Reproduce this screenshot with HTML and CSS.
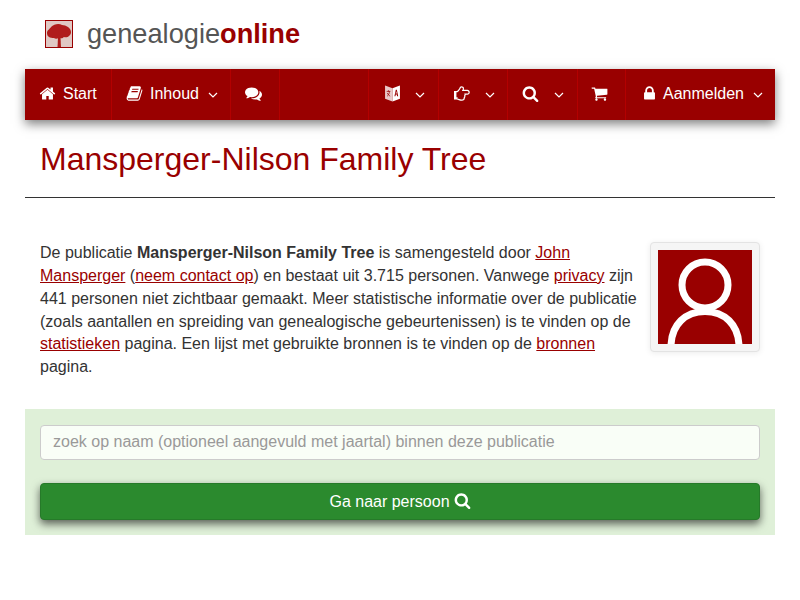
FILE: index.html
```html
<!DOCTYPE html>
<html lang="nl">
<head>
    <meta charset="UTF-8">
    <meta name="viewport" content="width=device-width, initial-scale=1.0">
    <title>Mansperger-Nilson Family Tree</title>
    <link rel="stylesheet" href="styles.css">
</head>
<body>
    <div class="page">
        <header class="brand">
            <svg class="brand-logo" viewBox="0 0 28 28">
                <defs><filter id="soft"><feGaussianBlur stdDeviation="0.6"/></filter></defs>
                <rect width="28" height="28" fill="#e0c8c4"/>
                <g filter="url(#soft)" fill="#b01f1a">
                    <path d="M12.500 27l.5-9h2.500l.5 9z"/>
                    <path d="M2 13c0-3 3-4 4-6 3-3 8-4 11-2 4 0 9 3 9 7 0 4-4 6-7 5-2 2-3 1-5 1-2 1-4 1-5 0-4 0-7-1-7-5z"/>
                </g>
                <rect x="0.500" y="0.500" width="27" height="27" fill="none" stroke="#990000"/>
            </svg>
            <div class="brand-name">genealogie<b>online</b></div>
        </header>

        <nav class="navbar">
            <a class="nav-item nav-start" href="#">
                <svg class="icon" viewBox="0 0 1792 1792"><path d="M1472 992v480q0 26-19 45t-45 19h-384v-384h-256v384h-384q-26 0-45-19t-19-45v-480q0-1 .5-3t.5-3l575-474 575 474q1 2 1 6zm223-69l-62 74q-8 9-21 11h-3q-13 0-21-7l-692-577-692 577q-12 8-24 7-13-2-21-11l-62-74q-8-10-7-23.500t11-21.500l719-599q32-26 76-26t76 26l244 204v-195q0-14 9-23t23-9h192q14 0 23 9t9 23v408l219 182q10 8 11 21.500t-7 23.500z"/></svg>
                Start
            </a>
            <a class="nav-item nav-inhoud" href="#">
                <svg class="icon" viewBox="0 0 1792 1792"><path d="M1703 478q40 57 18 129l-275 906q-19 64-76.500 107.500t-122.500 43.500h-923q-77 0-148.500-53.500t-99.500-131.500q-24-67-2-127 0-4 3-27t4-37q1-8-3-21.500t-3-19.500q2-11 8-21t16.500-23.500 16.500-23.500q23-38 45-91.500t30-91.500q3-10 .5-30t-.5-28q3-11 17-28t17-23q21-36 42-92t25-90q1-9-2.500-32t.5-28q4-13 22-30.500t22-22.500q19-26 42.500-84.500t27.500-96.500q1-8-3-25.500t-2-26.500q2-8 9-18t18-23 17-21q8-12 16.500-30.500t15-35 16-36 19.500-32 26.500-23.500 36-11.500 47.500 5.500l-1 3q38-9 51-9h761q74 0 114 56t18 130l-274 906q-36 119-71.500 153.500t-128.500 34.500h-869q-27 0-38 15-11 16-1 43 24 70 144 70h923q29 0 56-15.500t35-41.500l300-987q7-22 5-57 38 15 59 43zm-1064 2q-4 13 2 22.500t20 9.500h608q13 0 25.500-9.500t16.500-22.500l21-64q4-13-2-22.500t-20-9.500h-608q-13 0-25.500 9.500t-16.500 22.500zm-83 256q-4 13 2 22.500t20 9.500h608q13 0 25.500-9.500t16.500-22.500l21-64q4-13-2-22.500t-20-9.500h-608q-13 0-25.500 9.500t-16.500 22.500z"/></svg>
                Inhoud
                <svg class="caret" viewBox="0 0 10 6"><path d="M1 1l4 4 4-4"/></svg>
            </a>
            <a class="nav-item nav-chat" href="#">
                <svg class="icon" viewBox="0 0 1792 1792"><path d="M1408 768q0 139-94 257t-256.500 186.500-353.500 68.500q-86 0-176-16-124 88-278 128-36 9-86 16h-3q-11 0-20.500-8t-11.500-21q-1-3-1-6.500t.5-6.500 2-6l2.500-5 3.500-5.500 4-5 4.500-5 4-4.500q5-6 23-25t26-29.500 22.500-29 25-38.500 20.500-44q-124-72-195-177t-71-224q0-139 94-257t256.500-186.500 353.500-68.500 353.500 68.500 256.500 186.500 94 257zm384 256q0 120-71 224.500t-195 176.500q10 24 20.500 44t25 38.500 22.500 29 26 29.500 23 25q1 1 4 4.500t4.500 5 4 5 3.500 5.500l2.500 5 2 6 .5 6.500-1 6.500q-3 14-13 22t-22 7q-50-7-86-16-154-40-278-128-90 16-176 16-271 0-472-132 58 4 88 4 161 0 309-45t264-129q125-92 192-212t67-254q0-77-23-152 129 71 204 178t75 230z"/></svg>
            </a>
            <div class="nav-spacer"></div>
            <a class="nav-item nav-lang" href="#">
                <svg class="icon" viewBox="0 0 16 16">
                    <path class="page-left" d="M1 .5l7 2.500v12.500l-7-2.500z"/>
                    <path d="M8 3l7-2.500v12.500l-7 2.500z"/>
                    <path class="page-mark" d="M9.800 10.500l1.300-6h1l1.300 6h-1.100l-.3-1.500h-.9l-.3 1.500zM11 8h1l-.5-2.200z"/>
                    <path class="page-line" d="M2.500 6h3.500M4.200 5v1.200M3 10.500c1.500-1 2-3 2.200-4.500M3 7.500c.8 1.200 1.500 2.500 2.800 3"/>
                </svg>
                <svg class="caret" viewBox="0 0 10 6"><path d="M1 1l4 4 4-4"/></svg>
            </a>
            <a class="nav-item nav-hand" href="#">
                <svg class="icon" viewBox="0 0 1792 1792"><path d="M384 1344q0-26-19-45t-45-19-45 19-19 45 19 45 45 19 45-19 19-45zm1152-576q0-51-39-89.500t-89-38.500h-576q0-20 15-48.500t33-55 33-68 15-84.500q0-67-44.500-97.500t-115.500-30.500q-24 0-90 139-24 44-37 65-40 64-112 145-71 81-101 106-69 57-140 57h-32v640h32q72 0 167 32t193.500 64 179.500 32q189 0 189-167 0-26-5-56 30-16 47.500-52.500t17.500-73.500-18-69q53-50 53-119 0-25-10-55.500t-25-47.500h331q52 0 90-38t38-90zm128-1q0 105-76 181t-181 76h-169q-4 62-37 119 3 21 3 43 0 101-60 178 1 139-85 219.500t-227 80.500q-133 0-322-69-164-59-223-59h-288q-53 0-90.500-37.500t-37.500-90.500v-640q0-53 37.500-90.500t90.500-37.500h288q10 0 21.500-4.500t23.500-14 22.500-18 24-22.500 20.500-21.500 19-21.500 14-17q65-74 100-129 13-21 33-62t37-72 40.500-63 55-49.500 69.500-17.500q125 0 206.500 67t81.500 189q0 68-22 128h374q104 0 180 76t76 179z"/></svg>
                <svg class="caret" viewBox="0 0 10 6"><path d="M1 1l4 4 4-4"/></svg>
            </a>
            <a class="nav-item nav-search" href="#">
                <svg class="icon" viewBox="0 0 1792 1792"><path d="M1216 832q0-185-131.500-316.500t-316.500-131.500-316.500 131.500-131.500 316.500 131.500 316.500 316.500 131.500 316.500-131.500 131.500-316.500zm512 832q0 52-38 90t-90 38q-54 0-90-38l-343-342q-179 124-399 124-143 0-273.500-55.500t-225-150-150-225-55.500-273.500 55.500-273.500 150-225 225-150 273.500-55.500 273.500 55.500 225 150 150 225 55.500 273.500q0 220-124 399l343 343q37 37 37 90z"/></svg>
                <svg class="caret" viewBox="0 0 10 6"><path d="M1 1l4 4 4-4"/></svg>
            </a>
            <a class="nav-item nav-cart" href="#">
                <svg class="icon" viewBox="0 0 1792 1792"><path d="M704 1536q0 52-38 90t-90 38-90-38-38-90 38-90 90-38 90 38 38 90zm896 0q0 52-38 90t-90 38-90-38-38-90 38-90 90-38 90 38 38 90zm128-1088v512q0 24-16.500 42.500t-40.500 21.500l-1044 122q13 60 13 70 0 16-24 64h920q26 0 45 19t19 45-19 45-45 19h-1024q-26 0-45-19t-19-45q0-11 8-31.500t16-36 21.500-40 15.500-29.500l-177-823h-204q-26 0-45-19t-19-45 19-45 45-19h256q16 0 28.500 6.500t19.500 15.500 13 24.500 8 26 5.500 29.500 4.500 26h1201q26 0 45 19t19 45z"/></svg>
            </a>
            <a class="nav-item nav-login" href="#">
                <svg class="icon" viewBox="0 0 1792 1792"><path d="M640 768h512v-192q0-106-75-181t-181-75-181 75-75 181v192zm832 96v576q0 40-28 68t-68 28h-960q-40 0-68-28t-28-68v-576q0-40 28-68t68-28h32v-192q0-184 132-316t316-132 316 132 132 316v192h32q40 0 68 28t28 68z"/></svg>
                Aanmelden
                <svg class="caret" viewBox="0 0 10 6"><path d="M1 1l4 4 4-4"/></svg>
            </a>
        </nav>

        <h1 class="title">Mansperger-Nilson Family Tree</h1>

        <section class="intro">
            <p class="intro-text">De publicatie <b>Mansperger-Nilson Family Tree</b> is samengesteld door <a href="#">John Mansperger</a> (<a href="#">neem contact op</a>) en bestaat uit 3.715 personen. Vanwege <a href="#">privacy</a> zijn 441 personen niet zichtbaar gemaakt. Meer statistische informatie over de publicatie (zoals aantallen en spreiding van genealogische gebeurtenissen) is te vinden op de <a href="#">statistieken</a> pagina. Een lijst met gebruikte bronnen is te vinden op de <a href="#">bronnen</a> pagina.</p>
            <div class="thumb">
                <svg viewBox="0 0 94 94">
                    <rect width="94" height="94" fill="#990000"/>
                    <path d="M13 97C13 74 28 61.500 47 61.500S81 74 81 97" fill="none" stroke="#fff" stroke-width="7"/>
                    <circle cx="47" cy="35" r="23" fill="#990000" stroke="#fff" stroke-width="7"/>
                </svg>
            </div>
        </section>

        <form class="search-box">
            <input class="search-input" type="text" placeholder="zoek op naam (optioneel aangevuld met jaartal) binnen deze publicatie">
            <button class="search-button" type="button">
                Ga naar persoon
                <svg class="icon" viewBox="0 0 1792 1792"><path d="M1216 832q0-185-131.500-316.500t-316.500-131.500-316.500 131.500-131.500 316.500 131.500 316.500 316.500 131.500 316.500-131.500 131.500-316.500zm512 832q0 52-38 90t-90 38q-54 0-90-38l-343-342q-179 124-399 124-143 0-273.500-55.500t-225-150-150-225-55.500-273.500 55.500-273.500 150-225 225-150 273.500-55.500 273.500 55.500 225 150 150 225 55.500 273.500q0 220-124 399l343 343q37 37 37 90z"/></svg>
            </button>
        </form>
    </div>
</body>
</html>
```

FILE: styles.css
```css
* {
    box-sizing: border-box;
}

body {
    margin: 0;
    background: #fff;
    color: #333;
    font-family: "Liberation Sans", Arial, sans-serif;
    font-size: 16px;
    line-height: 1.42857;
}

.page {
    width: 750px;
    margin: 0 auto;
}

.brand {
    display: flex;
    align-items: center;
    height: 69px;
    padding: 0 20px 1px;
}

.brand-logo {
    width: 28px;
    height: 28px;
    margin-right: 14px;
}

.brand-name {
    color: #555;
    font-size: 27.2px;
}

.brand-name b {
    color: #990000;
}

.navbar {
    display: flex;
    height: 51px;
    background: #990000;
    box-shadow: 0 4px 10px rgba(0, 0, 0, 0.5);
}

.nav-item {
    display: flex;
    align-items: center;
    height: 100%;
    color: #fff;
    text-decoration: none;
    border-right: 1px solid #b30000;
    padding-left: 14px;
}

.nav-start { width: 87px; }
.nav-inhoud { width: 119px; }
.nav-chat { width: 49px; }
.nav-lang { width: 70px; padding-left: 15px; }
.nav-hand { width: 69px; padding-left: 15px; }
.nav-search { width: 70px; }
.nav-cart { width: 48px; padding-left: 13px; }
.nav-login { width: 149px; border-right: 0; padding-left: 15px; }

.nav-spacer {
    flex: 1;
    border-right: 1px solid #b30000;
}

.icon {
    width: 17px;
    height: 17px;
    fill: currentColor;
    margin-right: 7px;
    margin-bottom: 2px;
    flex: none;
}

.nav-lang .icon,
.nav-hand .icon,
.nav-search .icon,
.nav-cart .icon {
    margin-right: 0;
}

.nav-login .icon {
    margin-right: 5px;
}

.page-left {
    fill: #e9c9c9;
}

.page-mark {
    fill: #990000;
    fill-rule: evenodd;
}

.page-line {
    fill: none;
    stroke: #990000;
    stroke-width: 0.7;
}

.caret {
    width: 10px;
    height: 6px;
    margin-left: 9px;
    fill: none;
    stroke: #fff;
    stroke-width: 1.2;
    flex: none;
}

.nav-lang .caret,
.nav-hand .caret {
    margin-left: 14px;
}

.nav-search .caret {
    margin-left: 15px;
}

.title {
    margin: 0;
    height: 78px;
    padding: 19px 15px 0;
    border-bottom: 1px solid #333;
    color: #990000;
    font-size: 32px;
    font-weight: 400;
    line-height: 40px;
}

.intro {
    display: flex;
    justify-content: space-between;
    padding: 44px 15px 0;
    height: 211px;
}

.intro-text {
    width: 600px;
    margin: 0;
}

.intro-text a {
    color: #990000;
}

.thumb {
    width: 110px;
    height: 110px;
    padding: 7px;
    background: #f5f5f5;
    border: 1px solid #e3e3e3;
    border-radius: 4px;
    box-shadow: 0 1px 6px rgba(0, 0, 0, 0.08);
}

.thumb svg {
    display: block;
    width: 94px;
    height: 94px;
}

.search-box {
    display: flex;
    flex-direction: column;
    height: 126px;
    padding: 16px 15px 0;
    background: #dff0d8;
}

.search-input {
    height: 35px;
    padding: 5px 12px 7px;
    background: #f9fef7;
    border: 1px solid #ccc;
    border-radius: 4px;
    color: #333;
    font-family: inherit;
    font-size: 16px;
}

.search-input::placeholder {
    color: #999;
    opacity: 1;
}

.search-button {
    display: flex;
    align-items: center;
    justify-content: center;
    height: 37px;
    margin-top: 23px;
    background: #2b8a2e;
    border: 1px solid #267a29;
    border-radius: 4px;
    box-shadow: 0 4px 8px rgba(0, 0, 0, 0.6);
    color: #fff;
    font-family: inherit;
    font-size: 16px;
}

.search-button .icon {
    margin: 0 0 2px 4px;
}
```
